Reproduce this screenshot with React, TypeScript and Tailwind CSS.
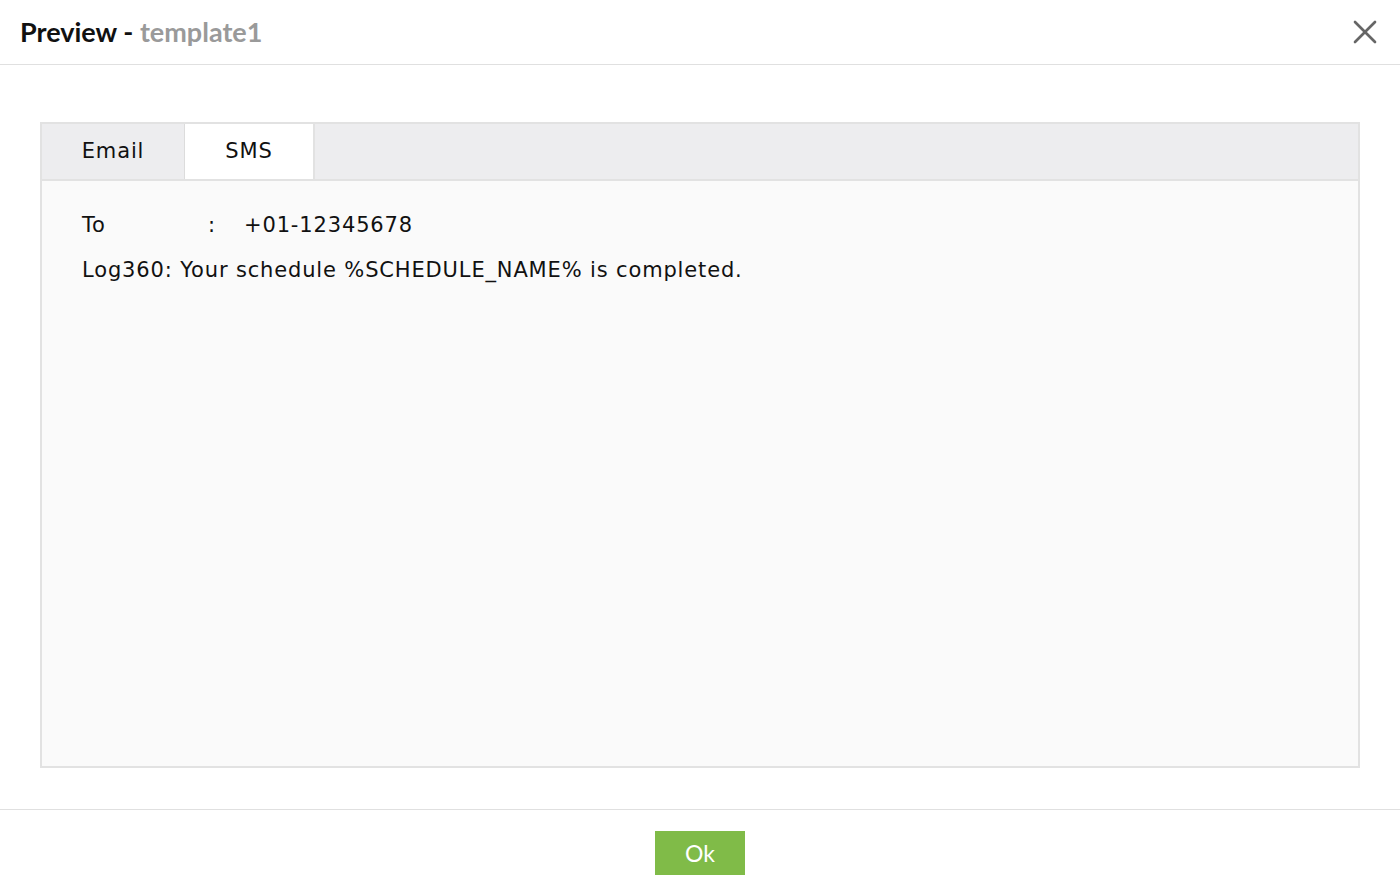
import { X } from "lucide-react";

export default function App() {
  const body = { fontFamily: "'DejaVu Sans', Verdana, sans-serif" };

  return (
    <div className="w-[1400px] h-[884px] bg-white flex flex-col" style={body}>
      {/* header */}
      <div className="h-[65px] shrink-0 px-5 flex items-center justify-between border-b border-[#e0e0e0]">
        <h1 className="text-[27px] font-bold text-[#111]" style={{ fontFamily: "Lato, sans-serif" }}>
          Preview - <span className="text-[#9a9a9a]">template1</span>
        </h1>
        <button className="text-[#666] mr-[-5px]">
          <X size={40} strokeWidth={1.6} />
        </button>
      </div>

      {/* tabs box */}
      <div className="flex-1 px-10 pt-[57px] pb-[41px] border-b border-[#e0e0e0]">
        <div className="h-[646px] border-2 border-[#e2e2e2] flex flex-col">
          <div className="h-[57px] shrink-0 bg-[#ededef] flex border-b-2 border-[#e2e2e2] text-[21px] tracking-[0.85px] text-[#111]">
            <button className="w-[143px] border-r border-[#dcdcdc]">Email</button>
            <button className="w-[130px] bg-white border-r-2 border-[#e2e2e2]">SMS</button>
          </div>
          <div className="flex-1 bg-[#fafafa] px-10 pt-[29px] text-[21px] tracking-[0.85px] text-[#111]">
            <div className="flex h-[32px] items-center">
              <span className="w-[126px]">To</span>
              <span className="w-[36px]">:</span>
              <span>+01-12345678</span>
            </div>
            <div className="flex h-[32px] items-center mt-[13px]">
              Log360: Your schedule %SCHEDULE_NAME% is completed.
            </div>
          </div>
        </div>
      </div>

      {/* footer */}
      <div className="h-[74px] shrink-0 flex justify-center pt-[21px]">
        <button
          className="w-[90px] h-[44px] bg-[#80bb48] text-white text-[23px]"
          style={{ fontFamily: "Lato, sans-serif" }}
        >
          Ok
        </button>
      </div>
    </div>
  );
}
